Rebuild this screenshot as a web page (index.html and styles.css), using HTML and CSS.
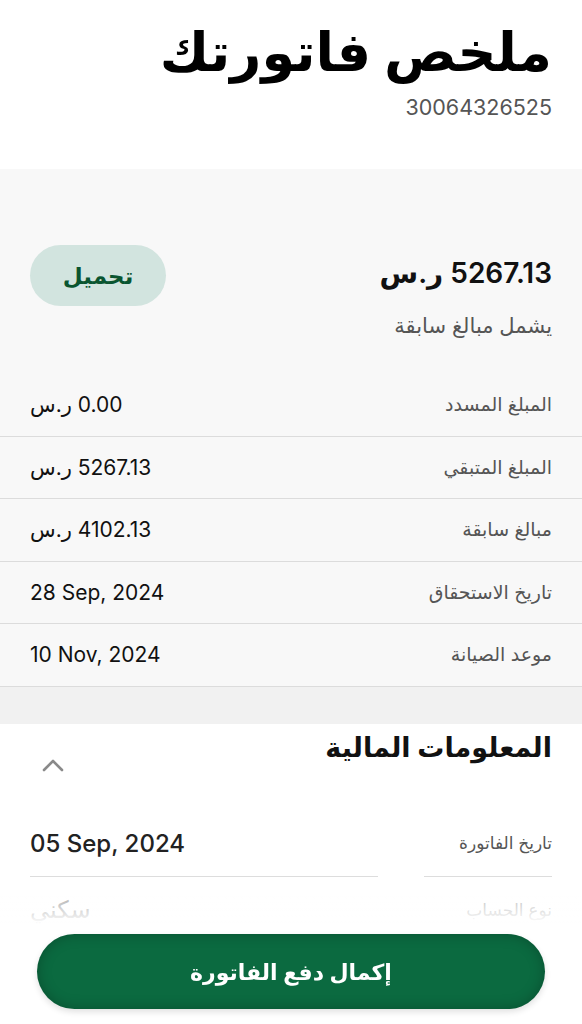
FILE: index.html
```html
<!DOCTYPE html>
<html lang="ar" dir="rtl">

<head>
    <meta charset="utf-8">
    <title>ملخص فاتورتك</title>

    <link rel="stylesheet" href="styles.css">
</head>

<body>

    <!-- رأس الصفحة -->
    <header class="page-head">
        <h1 class="page-title">ملخص فاتورتك</h1>
        <p class="bill-number">30064326525</p>
    </header>

    <!-- ملخص المبلغ -->
    <section class="summary">
        <div class="total">
            <div class="total-info">
                <p class="total-amount"><bdi>5267.13 ر.س</bdi></p>
                <p class="total-note">يشمل مبالغ سابقة</p>
            </div>
            <button class="download">تحميل</button>
        </div>

        <ul class="rows">
            <li><span class="label">المبلغ المسدد</span><span class="value"><bdi>0.00 ر.س</bdi></span></li>
            <li><span class="label">المبلغ المتبقي</span><span class="value"><bdi>5267.13 ر.س</bdi></span></li>
            <li><span class="label">مبالغ سابقة</span><span class="value"><bdi>4102.13 ر.س</bdi></span></li>
            <li><span class="label">تاريخ الاستحقاق</span><span class="value"><bdi>28 Sep, 2024</bdi></span></li>
            <li><span class="label">موعد الصيانة</span><span class="value"><bdi>10 Nov, 2024</bdi></span></li>
        </ul>
    </section>

    <div class="band"></div>

    <!-- المعلومات المالية -->
    <section class="finance">
        <div class="finance-head">
            <h2 class="finance-title">المعلومات المالية</h2>
            <svg class="chevron" width="22" height="14" viewBox="0 0 22 14">
                <path d="M2 12 L11 3 L20 12" fill="none" stroke="#8a8a8a" stroke-width="2.6" stroke-linecap="round" stroke-linejoin="round"/>
            </svg>
        </div>

        <div class="info-grid">
            <div class="info-label">تاريخ الفاتورة</div>
            <div class="info-value"><bdi>05 Sep, 2024</bdi></div>
            <div class="info-label">نوع الحساب</div>
            <div class="info-value">سكني</div>
        </div>
    </section>

    <!-- زر الدفع -->
    <div class="pay-bar">
        <button class="pay">إكمال دفع الفاتورة</button>
    </div>

</body>

</html>
```

FILE: styles.css
```css
* {
    box-sizing: border-box;
}

body {
    margin: 0;
    height: 1024px;
    overflow: hidden;
    background-color: #fff;
    font-family: Inter, "DejaVu Sans", sans-serif;
    color: #111;
}

p, h1, h2 {
    margin: 0;
}

ul {
    list-style-type: none;
    margin: 0;
    padding: 0;
}

.page-head {
    height: 169px;
    padding: 18px 30px 0;
}

.page-title {
    font-size: 54px;
    font-weight: 700;
    line-height: 68px;
    color: #000;
}

.bill-number {
    margin-top: 8px;
    font-size: 21.5px;
    color: #555;
}

.summary {
    background-color: #f8f8f8;
    padding-top: 76px;
}

.total {
    display: flex;
    justify-content: space-between;
    align-items: flex-start;
    padding: 0 30px;
}

.total-amount {
    font-size: 28px;
    font-weight: 600;
    line-height: 56px;
}

.total-note {
    margin-top: 12px;
    font-size: 21px;
    color: #555;
}

.download {
    width: 136px;
    height: 61px;
    border: none;
    border-radius: 31px;
    background-color: #d2e4df;
    color: #0a5530;
    font-family: inherit;
    font-size: 23px;
    font-weight: 600;
}

.rows {
    margin-top: 36px;
}

.rows li {
    display: flex;
    justify-content: space-between;
    align-items: center;
    height: 62.5px;
    padding: 0 30px;
    border-bottom: 1px solid #dcdcdc;
}

.rows .label {
    font-size: 19px;
    color: #555;
}

.rows .value {
    font-size: 21px;
    font-weight: 400;
    color: #111;
}

.band {
    height: 37px;
    background-color: #f1f1f1;
}

.finance {
    padding: 4px 30px 0;
}

.finance-head {
    display: flex;
    justify-content: space-between;
    align-items: flex-start;
}

.finance-title {
    font-size: 27px;
    font-weight: 600;
    line-height: 40px;
}

.chevron {
    margin-top: 30px;
    margin-left: 12px;
}

.info-grid {
    display: grid;
    grid-template-columns: 128px 348px;
    justify-content: space-between;
    margin-top: 39px;
}

.info-label,
.info-value {
    height: 66px;
    display: flex;
    align-items: center;
}

.info-label {
    font-size: 17px;
    color: #555;
}

.info-value {
    justify-content: flex-end;
    font-size: 24px;
    font-weight: 500;
    color: #222;
}

.info-grid > div:nth-child(-n+2) {
    border-bottom: 1px solid #ddd;
}

.pay-bar {
    position: fixed;
    left: 0;
    right: 0;
    bottom: 0;
    height: 128px;
    padding: 38px 37px 0;
    background: linear-gradient(to bottom, rgba(255, 255, 255, 0.65), #fff 22%);
}

.pay {
    width: 100%;
    height: 75px;
    border: none;
    border-radius: 38px;
    background-color: #0b6a40;
    box-shadow: inset 0 0 14px rgba(0, 0, 0, 0.25), 0 3px 6px rgba(0, 0, 0, 0.12);
    color: #fff;
    font-family: inherit;
    font-size: 22px;
    font-weight: 600;
}
```
